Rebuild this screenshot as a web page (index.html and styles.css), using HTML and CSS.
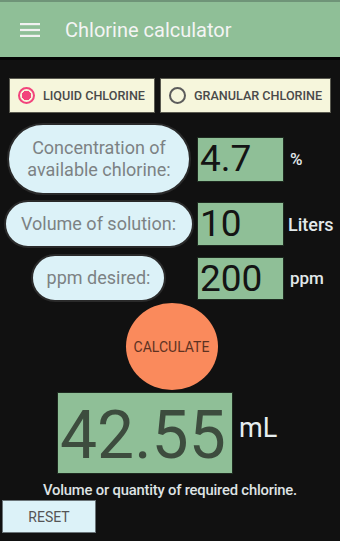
FILE: index.html
```html
<!DOCTYPE html>
<html lang="en">

<head>
    <meta charset="UTF-8">
    <meta name="viewport" content="width=device-width, initial-scale=1.0">
    <title>Chlorine calculator</title>
    <link rel="stylesheet" href="styles.css">
</head>

<body>
    <div class="toolbar">
        <svg class="menu-icon" width="20" height="14" viewBox="0 0 20 14">
            <rect x="0" y="0" width="20" height="2.2" fill="#f2f2f2" />
            <rect x="0" y="5.9" width="20" height="2.2" fill="#f2f2f2" />
            <rect x="0" y="11.8" width="20" height="2.2" fill="#f2f2f2" />
        </svg>
        <span class="title">Chlorine calculator</span>
    </div>

    <div class="radio-row">
        <label class="radio-box liquid">
            <span class="radio checked"></span>
            <span>LIQUID CHLORINE</span>
        </label>
        <label class="radio-box granular">
            <span class="radio"></span>
            <span>GRANULAR CHLORINE</span>
        </label>
    </div>

    <div class="row row-conc">
        <div class="label-cell">
            <div class="pill pill-conc">Concentration of<br>available chlorine:</div>
        </div>
        <div class="field">4.7</div>
        <span class="unit">%</span>
    </div>

    <div class="row row-vol">
        <div class="label-cell">
            <div class="pill pill-vol">Volume of solution:</div>
        </div>
        <div class="field">10</div>
        <span class="unit">Liters</span>
    </div>

    <div class="row row-ppm">
        <div class="label-cell">
            <div class="pill pill-ppm">ppm desired:</div>
        </div>
        <div class="field">200</div>
        <span class="unit">ppm</span>
    </div>

    <div class="calc-wrap">
        <button class="calc">CALCULATE</button>
    </div>

    <div class="result-row">
        <div class="result">42.55</div>
        <span class="result-unit">mL</span>
    </div>

    <p class="note">Volume or quantity of required chlorine.</p>

    <button class="reset">RESET</button>
</body>

</html>
```

FILE: styles.css
```css
body {
    font-family: Roboto, "Liberation Sans", sans-serif;
    margin: 0;
    padding: 0;
    background-color: #111;
    width: 340px;
    height: 541px;
    overflow: hidden;
}

.toolbar {
    display: flex;
    align-items: center;
    height: 55px;
    margin-top: 2px;
    background-color: #8fbf97;
    border-bottom: 3px solid #050505;
    box-shadow: 0 -2px 0 #6f9478;
}

.menu-icon {
    margin-left: 20px;
    margin-top: 1px;
}

.title {
    margin-left: 25px;
    color: #f4f4f4;
    font-size: 20px;
}

.radio-row {
    display: flex;
    gap: 5px;
    margin: 18px 0 0 9px;
}

.radio-box {
    display: flex;
    align-items: center;
    box-sizing: border-box;
    height: 35px;
    background-color: #f6f6dc;
    border: 1.5px solid #5a5a50;
    font-size: 12.6px;
    font-weight: 500;
    color: #4a4a4a;
    white-space: nowrap;
}

.liquid {
    width: 146px;
}

.granular {
    width: 171px;
}

.radio {
    flex: none;
    box-sizing: border-box;
    width: 17px;
    height: 17px;
    margin: 0 8px 0 8px;
    border: 2px solid #5c5c5c;
    border-radius: 50%;
}

.radio.checked {
    border-color: #f2447c;
    background: radial-gradient(circle, #f2447c 0 4.5px, transparent 5px);
}

.row {
    display: flex;
    align-items: center;
}

.row-conc {
    margin-top: 10px;
    height: 72px;
}

.row-vol {
    margin-top: 5px;
    height: 48px;
}

.row-ppm {
    margin-top: 6px;
    height: 48px;
}

.label-cell {
    width: 197px;
    display: flex;
    justify-content: center;
}

.pill {
    box-sizing: border-box;
    display: flex;
    align-items: center;
    justify-content: center;
    text-align: center;
    background-color: #dcf2f8;
    border: 2px solid #2a2a2a;
    border-radius: 40px;
    color: #7c8284;
    font-size: 18px;
    line-height: 22px;
}

.pill-conc {
    width: 184px;
    height: 72px;
    margin-left: 1px;
}

.pill-vol {
    width: 190px;
    height: 48px;
}

.pill-ppm {
    width: 135px;
    height: 48px;
}

.field {
    box-sizing: border-box;
    width: 87px;
    height: 45px;
    padding-left: 2px;
    background-color: #8fbf97;
    border: 1.5px solid #1e2a20;
    color: #141414;
    font-size: 37px;
    line-height: 42px;
}

.row-vol .field {
    height: 44px;
}

.row-ppm .field {
    height: 43px;
}

.unit {
    margin-left: 6px;
    color: #e2e8ea;
    font-size: 17px;
    font-weight: 500;
}

.row-vol .unit {
    margin-left: 4px;
    font-size: 18px;
}

.calc-wrap {
    display: flex;
    justify-content: center;
    margin-top: 1px;
    padding-left: 3px;
}

.calc {
    width: 92px;
    height: 87px;
    padding: 0;
    border: none;
    border-radius: 50%;
    background-color: #fa8a5c;
    color: #5e3222;
    font-family: Roboto, "Liberation Sans", sans-serif;
    font-size: 14px;
}

.result-row {
    display: flex;
    align-items: center;
    margin: 2px 0 0 57px;
}

.result {
    box-sizing: border-box;
    width: 176px;
    height: 82px;
    padding-left: 2px;
    background-color: #8fbf97;
    border: 1.5px solid #1e2a20;
    color: #3d4c3e;
    font-size: 66px;
    line-height: 86px;
}

.result-unit {
    margin: 0 0 10px 6px;
    color: #e6eef0;
    font-size: 27px;
}

.note {
    margin: 7px 0 0 0;
    text-align: center;
    color: #dfe3e4;
    font-size: 14.8px;
    font-weight: 500;
    letter-spacing: -0.2px;
}

.reset {
    display: block;
    box-sizing: border-box;
    width: 94px;
    height: 33px;
    margin: 1px 0 0 2px;
    background-color: #dcf2f8;
    border: 1.5px solid #6a7478;
    color: #555;
    font-family: Roboto, "Liberation Sans", sans-serif;
    font-size: 14px;
}
```
